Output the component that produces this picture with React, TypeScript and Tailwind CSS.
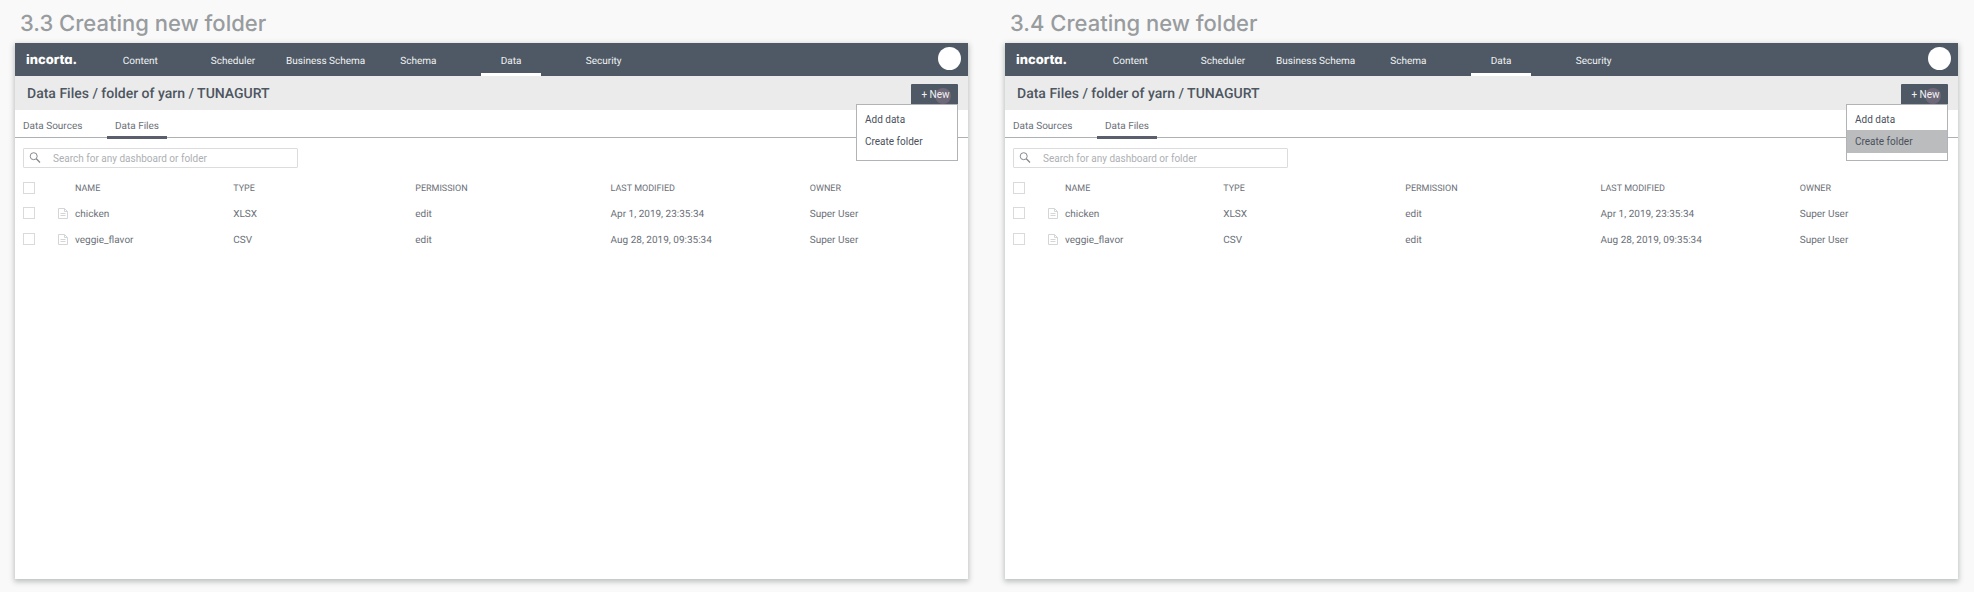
import React from "react";

type FileRow = {
  name: string;
  type: string;
  permission: string;
  modified: string;
  owner: string;
};

const files: FileRow[] = [
  { name: "chicken", type: "XLSX", permission: "edit", modified: "Apr 1, 2019, 23:35:34", owner: "Super User" },
  { name: "veggie_flavor", type: "CSV", permission: "edit", modified: "Aug 28, 2019, 09:35:34", owner: "Super User" },
];

const navItems = ["Content", "Scheduler", "Business Schema", "Schema", "Data", "Security"];

function Checkbox({ label }: { label: string }) {
  return (
    <input
      type="checkbox"
      aria-label={label}
      className="block size-3 appearance-none border border-[#d9dadb] bg-white"
    />
  );
}

function FileIcon() {
  return (
    <svg viewBox="0 0 10 11" className="block h-[11px] w-[10px]" fill="none" stroke="#d3d5d7" aria-hidden="true">
      <path d="M0.5 0.5H6.5L9.5 3.5V10.5H0.5Z" />
      <path d="M6.5 0.5V3.5H9.5M2.5 5.5H7.5M2.5 7.5H7.5" />
    </svg>
  );
}

function SearchIcon() {
  return (
    <svg viewBox="0 0 12 12" className="size-3 shrink-0" fill="none" stroke="#85898e" aria-hidden="true">
      <circle cx="4.7" cy="4.2" r="3.5" strokeWidth="1" />
      <path d="M7.3 6.8L11 10.5" strokeWidth="1.3" />
    </svg>
  );
}

function NavBar() {
  return (
    <header className="flex h-[33px] items-center justify-between bg-[#4e5965] pr-[7px] pl-[11px]">
      <div className="flex h-full items-center">
        <a
          href="#home"
          className="w-[68px] font-['Inter',sans-serif] text-[13px] leading-4 font-extrabold text-white [font-feature-settings:'cv11']"
        >
          incorta.
        </a>
        <nav className="grid h-full w-[556px] grid-cols-6">
          {navItems.map((item) => (
            <a
              key={item}
              href="#nav"
              className="relative flex items-center justify-center pt-1 text-[10px] whitespace-nowrap text-[#f1f2f3]"
            >
              {item}
              {item === "Data" && <span className="absolute bottom-0 h-[3px] w-[60px] bg-white" />}
            </a>
          ))}
        </nav>
      </div>
      <button type="button" aria-label="Account" className="mb-0.5 size-[23px] rounded-full bg-white" />
    </header>
  );
}

function NewMenu({ highlighted }: { highlighted: boolean }) {
  return (
    <div className="relative flex">
      <button
        type="button"
        className="relative h-5 w-[47px] rounded-t-[1px] bg-[#4e5965] pl-0.5 text-[10px] text-[#f1f2f3]"
      >
        <span className="absolute top-1 right-[7px] size-4 rounded-full bg-[#6f6878]" />
        <span className="relative">+ New</span>
      </button>
      <div
        role="menu"
        className="absolute top-full right-0 z-10 flex h-[57px] w-[102px] flex-col border border-[#b1b4b6] bg-white pt-[3px]"
      >
        <button type="button" role="menuitem" className="h-[22px] pl-2 text-left text-[10px] text-[#4a515c]">
          Add data
        </button>
        <button
          type="button"
          role="menuitem"
          className={
            highlighted
              ? "h-[23px] bg-[#bbbcbd] pl-2 text-left text-[10px] text-[#4a515c]"
              : "h-[23px] pl-2 text-left text-[10px] text-[#4a515c]"
          }
        >
          Create folder
        </button>
      </div>
    </div>
  );
}

function Screen({ title, highlighted = false }: { title: string; highlighted?: boolean }) {
  const searchId = highlighted ? "search-b" : "search-a";
  return (
    <section className="flex min-w-0 flex-1 flex-col">
      <h1 className="flex h-[43px] items-center pt-1 pl-[5px] font-['Inter',sans-serif] text-[22px] leading-7 font-medium text-[#989c9f]">
        {title}
      </h1>
      <div className="flex-1 bg-white text-[#6b7078] shadow-[0_2px_5px_1px_rgba(60,70,70,0.3)]">
        <NavBar />
        <div className="flex h-[34px] items-start justify-between bg-[#ebebeb] pt-2 pr-[10px] pl-3">
          <h2 className="text-[14px] leading-[21px] font-medium text-[#4d5661]">
            Data Files / folder of yarn / TUNAGURT
          </h2>
          <NewMenu highlighted={highlighted} />
        </div>
        <div className="flex h-7 border-b border-[#aeb1b4] pl-2 text-[10px]">
          <a href="#sources" className="flex h-7 w-[84px] items-center pt-1">
            Data Sources
          </a>
          <a
            href="#files"
            className="flex h-[29px] w-[60px] items-center justify-center border-b-[3px] border-[#5a5e6d] pt-1.5"
          >
            Data Files
          </a>
        </div>
        <div className="px-2 pt-[10px]">
          <label
            htmlFor={searchId}
            className="flex h-5 w-[275px] items-center rounded-[1px] border border-[#dbdcdd] pl-[5px]"
          >
            <SearchIcon />
            <input
              id={searchId}
              type="text"
              aria-label="Search"
              placeholder="Search for any dashboard or folder"
              className="ml-3 min-w-0 flex-1 bg-transparent text-[10px] outline-none placeholder:text-[#adb0b3]"
            />
          </label>
        </div>
        <table className="mt-[7px] w-full table-fixed text-left text-[10px]">
          <colgroup>
            <col className="w-[43px]" />
            <col className="w-[17px]" />
            <col className="w-[16.6%]" />
            <col className="w-[19.1%]" />
            <col className="w-[20.5%]" />
            <col className="w-[20.9%]" />
            <col />
          </colgroup>
          <thead>
            <tr className="h-[25px] text-[9px]">
              <th className="p-0 pl-2">
                <Checkbox label="Select all files" />
              </th>
              <th className="p-0" />
              <th className="p-0 pt-1 font-normal">NAME</th>
              <th className="p-0 pt-1 font-normal">TYPE</th>
              <th className="p-0 pt-1 font-normal">PERMISSION</th>
              <th className="p-0 pt-1 font-normal">LAST MODIFIED</th>
              <th className="p-0 pt-1 font-normal">OWNER</th>
            </tr>
          </thead>
          <tbody>
            {files.map((file) => (
              <tr key={file.name} className="h-[26px]">
                <td className="p-0 pl-2">
                  <Checkbox label={`Select ${file.name}`} />
                </td>
                <td className="p-0">
                  <FileIcon />
                </td>
                <td className="p-0 pt-0.5">{file.name}</td>
                <td className="p-0 pt-0.5">{file.type}</td>
                <td className="p-0 pt-0.5">{file.permission}</td>
                <td className="p-0 pt-0.5">{file.modified}</td>
                <td className="p-0 pt-0.5">{file.owner}</td>
              </tr>
            ))}
          </tbody>
        </table>
      </div>
    </section>
  );
}

export default function App() {
  return (
    <main className="flex min-h-screen gap-[37px] bg-[#f9f9f9] pr-4 pb-[13px] pl-[15px] font-['Roboto',sans-serif] [text-rendering:geometricPrecision]">
      <Screen title="3.3 Creating new folder" />
      <Screen title="3.4 Creating new folder" highlighted />
    </main>
  );
}
